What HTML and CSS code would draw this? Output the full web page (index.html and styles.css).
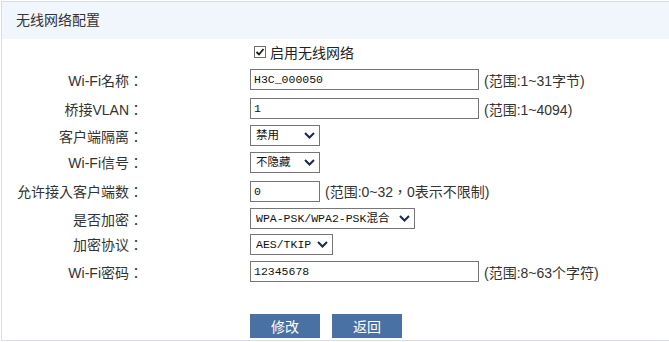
FILE: index.html
```html
<!DOCTYPE html>
<html lang="zh-CN">
    <head>
        <meta charset="utf-8">
        <title>无线网络配置</title>
        <link rel="stylesheet" href="styles.css">
    </head>
    <body>
        <div class="panel">
            <div class="panel-head">无线网络配置</div>
            <form class="cfg" name="wlanform">
                <span class="lbl"></span>
                <div class="ctl">
                    <label class="chk">
                        <span class="box">
                            <svg width="10" height="10" viewBox="0 0 10 10"><polyline points="1.5,5 4,7.5 8.5,2" fill="none" stroke="#1b1b1b" stroke-width="1.8"/></svg>
                        </span>启用无线网络
                    </label>
                </div>

                <span class="lbl">Wi-Fi名称：</span>
                <div class="ctl"><input type="text" class="txt long" value="H3C_000050"><span class="hint">(范围:1~31字节)</span></div>

                <span class="lbl">桥接VLAN：</span>
                <div class="ctl"><input type="text" class="txt long" value="1"><span class="hint">(范围:1~4094)</span></div>

                <span class="lbl">客户端隔离：</span>
                <div class="ctl">
                    <span class="sel">
                        <select class="w70"><option>禁用</option><option>启用</option></select>
                        <svg class="arrow" width="11" height="7" viewBox="0 0 11 7"><polyline points="1,1 5.5,5.5 10,1" fill="none" stroke="#1c2a48" stroke-width="2"/></svg>
                    </span>
                </div>

                <span class="lbl">Wi-Fi信号：</span>
                <div class="ctl">
                    <span class="sel">
                        <select class="w70"><option>不隐藏</option><option>隐藏</option></select>
                        <svg class="arrow" width="11" height="7" viewBox="0 0 11 7"><polyline points="1,1 5.5,5.5 10,1" fill="none" stroke="#1c2a48" stroke-width="2"/></svg>
                    </span>
                </div>

                <span class="lbl">允许接入客户端数：</span>
                <div class="ctl"><input type="text" class="txt short" value="0"><span class="hint">(范围:0~32，0表示不限制)</span></div>

                <span class="lbl">是否加密：</span>
                <div class="ctl">
                    <span class="sel">
                        <select class="w165"><option>WPA-PSK/WPA2-PSK混合</option><option>不加密</option></select>
                        <svg class="arrow" width="11" height="7" viewBox="0 0 11 7"><polyline points="1,1 5.5,5.5 10,1" fill="none" stroke="#1c2a48" stroke-width="2"/></svg>
                    </span>
                </div>

                <span class="lbl">加密协议：</span>
                <div class="ctl">
                    <span class="sel">
                        <select class="w83"><option>AES/TKIP</option><option>AES</option></select>
                        <svg class="arrow" width="11" height="7" viewBox="0 0 11 7"><polyline points="1,1 5.5,5.5 10,1" fill="none" stroke="#1c2a48" stroke-width="2"/></svg>
                    </span>
                </div>

                <span class="lbl">Wi-Fi密码：</span>
                <div class="ctl"><input type="text" class="txt long" value="12345678"><span class="hint">(范围:8~63个字符)</span></div>

                <span class="lbl"></span>
                <div class="ctl actions">
                    <button type="button" class="btn">修改</button>
                    <button type="button" class="btn">返回</button>
                </div>
            </form>
        </div>
    </body>
</html>
```

FILE: styles.css
```css
body{
    margin:0;
    font-family:"Liberation Sans","Noto Sans CJK SC",sans-serif;
    color:#333;
    background:#fff;
}
.panel{
    margin:1px 0 0 1px;
    width:700px;
    height:340px;
    box-sizing:border-box;
    border:1px solid #dcdce6;
    overflow:hidden;
}
.panel-head{
    height:37px;
    line-height:37px;
    padding-left:14px;
    background:#f1f6fd;
    font-size:14px;
    color:#333;
}
.cfg{
    display:grid;
    grid-template-columns:141px 1fr;
    grid-template-rows:26px 29px 29px 25px 28px 30px 25px 26px 29px 55px;
    column-gap:107px;
}
/* centred full-width punctuation, as in the original UI font */
.lbl,
.hint{
    font-family:"Liberation Sans","Noto Sans CJK TC",sans-serif;
    font-feature-settings:"locl" 0;
    font-size:14px;
    color:#333;
    white-space:nowrap;
}
.lbl{
    display:flex;
    align-items:center;
    justify-content:flex-end;
}
.hint{
    margin-left:5px;
}
.ctl{
    display:flex;
    align-items:center;
}
.chk{
    display:flex;
    align-items:center;
    font-size:14px;
    color:#222;
}
.box{
    display:flex;
    align-items:center;
    justify-content:center;
    width:10px;
    height:10px;
    margin:0 4px 0 4px;
    border:1px solid #6d6d6d;
    background:#fff;
}
.txt{
    height:21px;
    box-sizing:border-box;
    border:1px solid #767676;
    padding:0 3px;
    margin:0;
    font-family:"Liberation Mono","Noto Sans CJK SC",monospace;
    font-size:11.5px;
    color:#111;
    outline:none;
}
.long{
    width:229px;
}
.short{
    width:70px;
}
.sel{
    position:relative;
    display:inline-flex;
}
.sel select{
    -webkit-appearance:none;
    appearance:none;
    height:21px;
    box-sizing:border-box;
    border:1px solid #767676;
    border-radius:0;
    background:#fff;
    padding:0 0 0 5px;
    margin:0;
    font-family:"Liberation Mono","Noto Sans CJK SC",monospace;
    font-size:11.5px;
    color:#111;
}
.sel .arrow{
    position:absolute;
    right:5px;
    top:7px;
    pointer-events:none;
}
.w70{
    width:70px;
}
.w83{
    width:83px;
}
.w165{
    width:165px;
}
.actions{
    align-items:flex-start;
    padding-top:28px;
    gap:12px;
}
.btn{
    width:70px;
    height:24px;
    border:0;
    margin:0;
    padding:0;
    background:#4a71a3;
    color:#fff;
    font-family:"Liberation Sans","Noto Sans CJK SC",sans-serif;
    font-size:14px;
}
```
